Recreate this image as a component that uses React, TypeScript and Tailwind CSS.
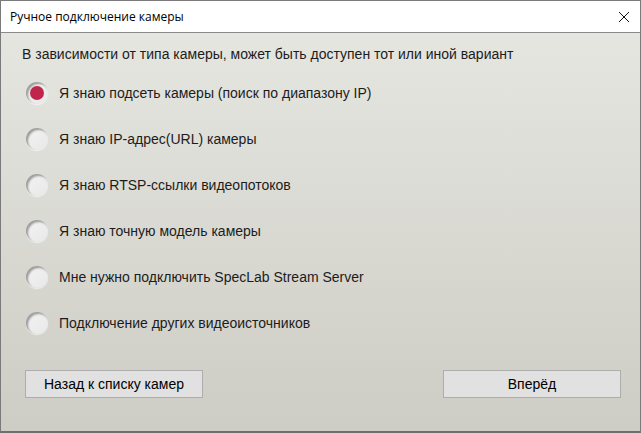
import { useState } from "react";

const options = [
  "Я знаю подсеть камеры (поиск по диапазону IP)",
  "Я знаю IP-адрес(URL) камеры",
  "Я знаю RTSP-ссылки видеопотоков",
  "Я знаю точную модель камеры",
  "Мне нужно подключить SpecLab Stream Server",
  "Подключение других видеоисточников",
];

export default function App() {
  const [selected, setSelected] = useState(0);

  return (
    <div className="w-[641px] h-[433px] flex flex-col border border-[#7a7a7a] border-b-2 border-b-[#6e6e6e] overflow-hidden font-['Liberation_Sans',Arial,sans-serif]">
      {/* Title bar */}
      <div className="h-[32px] shrink-0 bg-white flex items-center justify-between pl-[9px] pr-[9px] border-b border-[#8a8a8a]">
        <span className="text-[12px] text-black font-['Open_Sans','Noto_Sans',sans-serif]">
          Ручное подключение камеры
        </span>
        <svg width="12" height="12" viewBox="0 0 12 12" className="mr-[1px]">
          <path d="M1 1 L11 11 M11 1 L1 11" stroke="#111" strokeWidth="1" fill="none" />
        </svg>
      </div>

      {/* Body */}
      <div className="flex-1 flex flex-col bg-gradient-to-b from-[#e6e6e1] to-[#cdcdc5] pl-[21px] pr-[19px]">
        <p className="mt-[11px] h-[20px] leading-[20px] text-[14px] text-[#1c1c1c]">
          В зависимости от типа камеры, может быть доступен тот или иной вариант
        </p>

        <div className="mt-[18px] flex flex-col gap-[24px] pl-[4px]">
          {options.map((label, i) => (
            <label
              key={label}
              onClick={() => setSelected(i)}
              className="flex items-center gap-[11px] h-[22px] cursor-default"
            >
              <span className="w-[22px] h-[22px] rounded-full shrink-0 flex items-center justify-center bg-gradient-to-br from-[#f3f3f3] to-[#e8e8e8] shadow-[inset_2px_2px_2px_rgba(0,0,0,0.35),0_1px_1px_rgba(255,255,255,0.6)]">
                {selected === i && (
                  <span className="w-[14px] h-[14px] rounded-full bg-[#c0254c]" />
                )}
              </span>
              <span className="text-[14px] text-[#1c1c1c] leading-[20px]">{label}</span>
            </label>
          ))}
        </div>

        <div className="mt-[36px] flex justify-between pl-[3px]">
          <button className="w-[178px] h-[28px] bg-[#e1e1e1] border border-[#adadad] text-[14px] text-black">
            Назад к списку камер
          </button>
          <button className="w-[178px] h-[28px] bg-[#e1e1e1] border border-[#adadad] text-[14px] text-black">
            Вперёд
          </button>
        </div>
      </div>
    </div>
  );
}
